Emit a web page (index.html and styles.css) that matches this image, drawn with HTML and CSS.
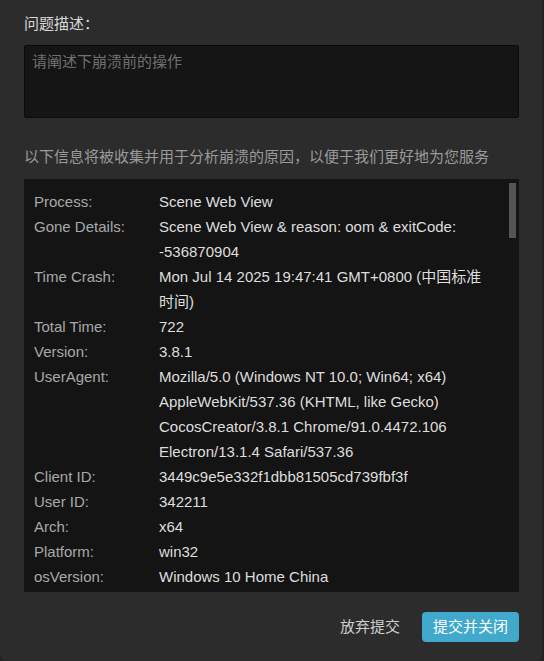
FILE: index.html
```html
<!DOCTYPE html>
<html lang="zh-CN">
<head>
    <meta charset="UTF-8">
    <meta name="viewport" content="width=device-width, initial-scale=1.0">
    <title>崩溃报告</title>
    <link rel="stylesheet" href="styles.css">
</head>
<body>
    <div class="dialog">
        <label class="field-title" for="desc">问题描述：</label>
        <textarea id="desc" class="desc-input" placeholder="请阐述下崩溃前的操作"></textarea>

        <p class="info-text">以下信息将被收集并用于分析崩溃的原因，以便于我们更好地为您服务</p>

        <div class="info-box">
            <div class="info-list">
                <div class="info-row"><span class="info-label">Process:</span><span class="info-value">Scene Web View</span></div>
                <div class="info-row"><span class="info-label">Gone Details:</span><span class="info-value">Scene Web View &amp; reason: oom &amp; exitCode: -536870904</span></div>
                <div class="info-row"><span class="info-label">Time Crash:</span><span class="info-value">Mon Jul 14 2025 19:47:41 GMT+0800 (中国标准时间)</span></div>
                <div class="info-row"><span class="info-label">Total Time:</span><span class="info-value">722</span></div>
                <div class="info-row"><span class="info-label">Version:</span><span class="info-value">3.8.1</span></div>
                <div class="info-row"><span class="info-label">UserAgent:</span><span class="info-value">Mozilla/5.0 (Windows NT 10.0; Win64; x64) AppleWebKit/537.36 (KHTML, like Gecko) CocosCreator/3.8.1 Chrome/91.0.4472.106 Electron/13.1.4 Safari/537.36</span></div>
                <div class="info-row"><span class="info-label">Client ID:</span><span class="info-value">3449c9e5e332f1dbb81505cd739fbf3f</span></div>
                <div class="info-row"><span class="info-label">User ID:</span><span class="info-value">342211</span></div>
                <div class="info-row"><span class="info-label">Arch:</span><span class="info-value">x64</span></div>
                <div class="info-row"><span class="info-label">Platform:</span><span class="info-value">win32</span></div>
                <div class="info-row"><span class="info-label">osVersion:</span><span class="info-value">Windows 10 Home China</span></div>
            </div>
            <div class="scroll-thumb"></div>
        </div>

        <div class="footer">
            <button class="btn btn-cancel">放弃提交</button>
            <button class="btn btn-submit">提交并关闭</button>
        </div>
    </div>
</body>
</html>
```

FILE: styles.css
```css
* {
    margin: 0;
    padding: 0;
    box-sizing: border-box;
}
body {
    background: #222;
    font-family: "Liberation Sans", Arial, "Noto Sans CJK SC", sans-serif;
    font-size: 15px;
    line-height: 20px;
}
.dialog {
    width: 542px;
    height: 661px;
    background: #2c2c2c;
    border-radius: 0 0 6px 6px;
    padding: 14px 23px 0 24px;
    display: flex;
    flex-direction: column;
}
.field-title {
    display: block;
    color: #d8d8d8;
    margin-bottom: 11px;
}
.desc-input {
    display: block;
    width: 100%;
    height: 73px;
    background: #151515;
    border: 1px solid #0b0b0b;
    border-radius: 2px;
    padding: 6px 7px;
    color: #ddd;
    font: inherit;
    resize: none;
    outline: none;
}
.desc-input::placeholder {
    color: #707070;
}
.info-text {
    color: #9a9a9a;
    margin-top: 29px;
    margin-bottom: 12px;
}
.info-box {
    position: relative;
    height: 413px;
    background: #141414;
    overflow: hidden;
    padding: 10px 28px 0 10px;
}
.info-row {
    display: flex;
    line-height: 25px;
}
.info-label {
    flex: 0 0 125px;
    color: #a9a9a9;
}
.info-value {
    flex: 1;
    color: #dedede;
}
.scroll-thumb {
    position: absolute;
    top: 4px;
    right: 3px;
    width: 7px;
    height: 55px;
    background: #555;
}
.footer {
    display: flex;
    justify-content: flex-end;
    align-items: center;
    gap: 12px;
    margin-top: 20px;
}
.btn {
    height: 30px;
    border: none;
    border-radius: 4px;
    font: inherit;
    cursor: pointer;
}
.btn-cancel {
    background: transparent;
    color: #cfcfcf;
    padding: 0 10px;
}
.btn-submit {
    background: #41a9cb;
    color: #fff;
    width: 97px;
}
```
